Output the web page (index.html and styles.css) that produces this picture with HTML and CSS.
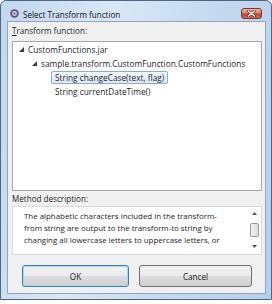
FILE: index.html
```html
<!DOCTYPE html>
<html>
<head>
<meta charset="utf-8">
<link rel="stylesheet" href="styles.css">
</head>
<body>
<div class="window">
  <div class="titlebar">
    <svg class="app-icon" width="9" height="9" viewBox="0 0 9 9">
      <circle cx="4.5" cy="4.5" r="4.2" fill="#5b4f7d"/>
      <circle cx="4.5" cy="4.5" r="2.4" fill="#e8e4f0"/>
      <circle cx="4.5" cy="4.5" r="1.2" fill="#7a6d9a"/>
    </svg>
    <span class="title">Select Transform function</span>
    <div class="close">
      <svg width="9" height="7" viewBox="0 0 9 7">
        <path d="M1.5 1 L7.5 6 M7.5 1 L1.5 6" stroke="#5a2018" stroke-width="2.6" stroke-linecap="round"/>
        <path d="M1.5 1 L7.5 6 M7.5 1 L1.5 6" stroke="#ffffff" stroke-width="1.4" stroke-linecap="round"/>
      </svg>
    </div>
  </div>
  <div class="client">
    <div class="label"><span class="u">T</span>ransform function:</div>
    <div class="tree">
      <div class="row lvl0"><svg class="exp" width="5" height="5" viewBox="0 0 5 5"><polygon points="5,0 5,5 0,5" fill="#3c3c3c"/></svg><span class="txt">CustomFunctions.jar</span></div>
      <div class="row lvl1"><svg class="exp" width="5" height="5" viewBox="0 0 5 5"><polygon points="5,0 5,5 0,5" fill="#3c3c3c"/></svg><span class="txt">sample.transform.CustomFunction.CustomFunctions</span></div>
      <div class="row lvl2"><span class="txt sel">String changeCase(text, flag)</span></div>
      <div class="row lvl2"><span class="txt">String currentDateTime()</span></div>
    </div>
    <div class="label label2">Method description:</div>
    <div class="desc">
      <div class="desc-text">The alphabetic characters included in the transform-<br>from string are output to the transform-to string by<br>changing all lowercase letters to uppercase letters, or</div>
      <div class="scroll">
        <svg width="5" height="3" viewBox="0 0 5 3"><polygon points="2.5,0 5,3 0,3" fill="#555"/></svg>
        <div class="thumb"></div>
        <svg width="5" height="3" viewBox="0 0 5 3"><polygon points="0,0 5,0 2.5,3" fill="#555"/></svg>
      </div>
    </div>
    <div class="buttons">
      <div class="btn ok">OK</div>
      <div class="btn">Cancel</div>
    </div>
  </div>
</div>
</body>
</html>
```

FILE: styles.css
```css
html, body {
  margin: 0;
  padding: 0;
  background: #ffffff;
}
body {
  font-family: "Open Sans", "Noto Sans", sans-serif;
  font-size: 8.1px;
  color: #1e1e1e;
}
.window {
  box-sizing: border-box;
  width: 272px;
  height: 300px;
  border: 1px solid #4e6784;
  border-radius: 6px 6px 0 0;
  background: linear-gradient(100deg, #c0d7ee 0%, #dae8f6 35%, #c8dcf1 60%, #b6cfea 100%);
  padding: 0 5px 5px 6px;
  display: flex;
  flex-direction: column;
}
.titlebar {
  height: 20px;
  display: flex;
  align-items: flex-start;
  padding-left: 3px;
}
.app-icon {
  margin-top: 8px;
  flex: none;
}
.title {
  margin-left: 4px;
  margin-top: 8px;
  line-height: 11px;
  color: #101010;
  flex: 1;
}
.close {
  margin-top: 7px;
  margin-right: 4px;
  width: 21px;
  height: 11px;
  box-sizing: border-box;
  border: 1px solid #6f3a33;
  border-radius: 3px;
  background: linear-gradient(to bottom, #eeb0a0 0%, #dc8470 45%, #c4412c 55%, #d8684e 100%);
  display: flex;
  align-items: center;
  justify-content: center;
}
.client {
  flex: 1;
  border: 1px solid #8ea6c2;
  background: #f0f0f0;
  padding: 2px 3px 0 4px;
  display: flex;
  flex-direction: column;
}
.label {
  line-height: 14px;
  height: 14px;
  white-space: nowrap;
}
.u {
  text-decoration: underline;
}
.tree {
  margin-top: 3px;
  height: 150px;
  box-sizing: border-box;
  border: 1px solid #a8a8a8;
  background: #ffffff;
  font-size: 8.3px;
}
.row {
  height: 14px;
  display: flex;
  align-items: center;
  white-space: nowrap;
}
.lvl0 { padding-left: 6px; }
.lvl1 { padding-left: 19px; }
.lvl2 { padding-left: 42px; }
.exp {
  flex: none;
  margin-right: 4px;
}
.txt {
  line-height: 13px;
}
.sel {
  box-sizing: border-box;
  height: 13px;
  line-height: 11px;
  padding: 0 3px;
  border: 1px solid #84acdd;
  border-radius: 2px;
  background: linear-gradient(to bottom, #f4f8fd, #dde9f8);
  margin-left: -4px;
}
.label2 {
  margin-top: 1px;
}
.desc {
  height: 49px;
  box-sizing: border-box;
  background: #ffffff;
  border: 1px solid #dadada;
  display: flex;
  overflow: hidden;
  font-size: 7.9px;
}
.desc-text {
  flex: 1;
  padding: 3px 0 0 11px;
  line-height: 12px;
  white-space: nowrap;
}
.scroll {
  width: 10px;
  margin-right: 2px;
  padding: 5px 0 6px;
  display: flex;
  flex-direction: column;
  align-items: center;
  justify-content: space-between;
}
.thumb {
  width: 9px;
  height: 14px;
  box-sizing: border-box;
  border: 1px solid #9a9a9a;
  border-radius: 2px;
  background: linear-gradient(to right, #f2f2f2, #dcdcdc);
}
.buttons {
  margin-top: 10px;
  padding-left: 10px;
  display: grid;
  grid-template-columns: 107px 113px;
  column-gap: 10px;
}
.btn {
  height: 22px;
  box-sizing: border-box;
  border: 1px solid #707070;
  border-radius: 3px;
  background: linear-gradient(to bottom, #f2f2f2 0%, #ebebeb 48%, #dddddd 52%, #cfcfcf 100%);
  display: flex;
  align-items: center;
  justify-content: center;
  color: #1a1a1a;
}
.ok {
  border-color: #3c7fb1;
  box-shadow: inset 0 0 0 1px #9fdcf6;
}
```
